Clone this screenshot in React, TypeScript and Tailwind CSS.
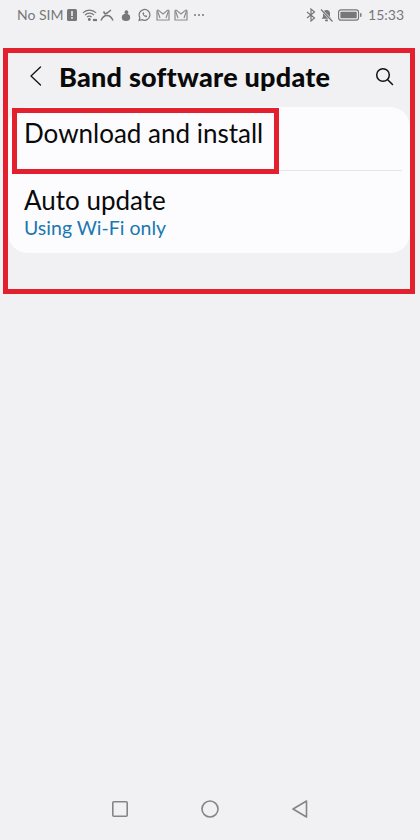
export default function App() {
  return (
    <div className="relative flex h-[840px] w-[420px] flex-col overflow-hidden bg-[#f1f1f3] font-['Lato',sans-serif]">
      {/* status bar */}
      <div className="flex h-[30px] items-center justify-between pl-[17px] pr-[16px] text-[#77777b]">
        <div className="flex items-center gap-[2px]">
          <span className="text-[14px] leading-none">No SIM</span>
          <svg width="10" height="14" viewBox="0 0 10 14" className="ml-[1px]">
            <rect x="0" y="1" width="10" height="12" rx="1.500" fill="#77777b" />
            <rect x="4.200" y="3" width="1.600" height="5" fill="#f1f1f3" />
            <rect x="4.200" y="9" width="1.600" height="1.800" fill="#f1f1f3" />
          </svg>
          <svg width="15" height="15" viewBox="0 0 17 15" fill="none" stroke="#77777b" strokeWidth="1.300" className="ml-[3px]">
            <path d="M1 4.500a10.500 10.500 0 0 1 15 0" />
            <path d="M3.300 7a7.200 7.200 0 0 1 10.400 0" />
            <path d="M5.600 9.400a3.800 3.800 0 0 1 5.400 0" />
            <circle cx="8.300" cy="12" r="1" fill="#77777b" />
            <circle cx="13.600" cy="12.600" r="0.700" fill="#77777b" />
            <circle cx="15.800" cy="12.600" r="0.700" fill="#77777b" />
          </svg>
          <svg width="14" height="13" viewBox="0 0 14 13" fill="none" stroke="#77777b" strokeWidth="1.500" className="ml-[1px]">
            <path d="M1 11.500C3 7 5 6.500 7 6.500s4 .5 6 5" />
            <path d="M5 5 3.500 2.500M5 5l2-1 4-3" />
          </svg>
          <svg width="10" height="13" viewBox="0 0 12 14" fill="#77777b" className="ml-[5px]">
            <circle cx="6.500" cy="3" r="2.200" />
            <ellipse cx="6" cy="9.300" rx="5" ry="4.300" />
          </svg>
          <svg width="13" height="14" viewBox="0 0 14 14" fill="none" stroke="#77777b" strokeWidth="1.300" className="ml-[5px]">
            <path d="M1.200 12.800 2 9.700A5.800 5.800 0 1 1 4.400 12Z" />
            <path d="M4.800 4.500c0 2.500 2.200 4.800 4.700 4.800l.4-1.400-1.500-.7-.7.7c-.7-.3-1.300-1-1.600-1.600l.7-.7-.6-1.500Z" fill="#77777b" stroke="none" />
          </svg>
          <svg width="14" height="12" viewBox="0 0 14 12" fill="none" stroke="#8b8b8f" strokeWidth="1.200" className="ml-[3px]">
            <path d="M1 11V2.200a1 1 0 0 1 1.600-.8L7 5l4.400-3.600a1 1 0 0 1 1.600.8V11Z" />
            <path d="M1.500 2 4 9M12.500 2 10 9" />
          </svg>
          <svg width="14" height="12" viewBox="0 0 14 12" fill="none" stroke="#8b8b8f" strokeWidth="1.200" className="ml-[2px]">
            <path d="M1 11V2.200a1 1 0 0 1 1.600-.8L7 5l4.400-3.600a1 1 0 0 1 1.600.8V11Z" />
            <path d="M1.500 2 4 9M12.500 2 10 9" />
          </svg>
          <span className="ml-[4px] flex gap-[2px]">
            <span className="h-[2px] w-[2px] rounded-full bg-[#77777b]" />
            <span className="h-[2px] w-[2px] rounded-full bg-[#77777b]" />
            <span className="h-[2px] w-[2px] rounded-full bg-[#77777b]" />
          </span>
        </div>
        <div className="flex items-center">
          <svg width="10" height="14" viewBox="0 0 10 14" fill="none" stroke="#77777b" strokeWidth="1.200">
            <path d="M1 4 8.500 10 5 13V1l3.500 3L1 10" />
          </svg>
          <svg width="13" height="13" viewBox="0 0 13 13" fill="#77777b" className="ml-[4px]">
            <path d="M6.500 1A3.600 3.600 0 0 0 3 4.600V8L1.500 9.800h10L10 8V4.600A3.600 3.600 0 0 0 6.500 1Z" />
            <rect x="5" y="10.500" width="3" height="1.800" rx="0.900" />
            <path d="M1 .5 12.500 12.500" stroke="#f1f1f3" strokeWidth="2.400" />
            <path d="M1 .5 12.500 12.500" stroke="#77777b" strokeWidth="1.200" />
          </svg>
          <svg width="24" height="12" viewBox="0 0 25 12" className="ml-[5px]">
            <rect x="0.600" y="0.600" width="20.800" height="10.800" rx="2.500" fill="none" stroke="#77777b" strokeWidth="1.200" />
            <rect x="2.500" y="2.500" width="17" height="7" rx="1" fill="#77777b" />
            <rect x="23" y="4" width="1.500" height="4" rx="0.700" fill="#77777b" />
          </svg>
          <span className="ml-[6px] text-[14px] leading-none">15:33</span>
        </div>
      </div>

      {/* header */}
      <div className="mt-[28px] flex h-[36px] items-center pl-[29px] pr-[26px]">
        <svg width="13" height="20" viewBox="0 0 13 20" fill="none" stroke="#111" strokeWidth="1.300" strokeLinecap="round" strokeLinejoin="round">
          <path d="M11.500 1 2 10l9.500 9" />
        </svg>
        <h1 className="ml-[17px] text-[27px] font-black leading-none tracking-[0.25px] text-[#0a0a0a]">Band software update</h1>
        <svg width="19" height="19" viewBox="0 0 19 19" fill="none" stroke="#111" strokeWidth="1.500" strokeLinecap="round" className="ml-auto">
          <circle cx="8" cy="8" r="6.300" />
          <path d="M12.700 12.700 17.500 17.500" />
        </svg>
      </div>

      {/* card */}
      <div className="ml-[8px] mr-[10px] mt-[13px] flex h-[146px] flex-col rounded-[20px] bg-[#fcfcfe] pl-[16px] pr-[8px]">
        <div className="h-[64px] border-b border-[#e6e6e8] pt-[11px] text-[26px] leading-[30px] text-[#0a0a0a]">
          Download and install
        </div>
        <div className="pt-[14px]">
          <div className="text-[26px] leading-[30px] text-[#0a0a0a]">Auto update</div>
          <div className="mt-[1px] text-[19.5px] leading-[24px] text-[#1a78b0]">Using Wi-Fi only</div>
        </div>
      </div>

      {/* nav bar */}
      <div className="mt-auto flex h-[48px] items-start justify-center gap-[72px] pt-[8px]">
        <svg width="18" height="18" viewBox="0 0 18 18" fill="none" stroke="#858587" strokeWidth="1.600">
          <rect x="1.800" y="1.800" width="14.400" height="14.400" rx="1" />
        </svg>
        <svg width="18" height="18" viewBox="0 0 18 18" fill="none" stroke="#858587" strokeWidth="1.600">
          <circle cx="9" cy="9" r="8" />
        </svg>
        <svg width="18" height="18" viewBox="0 0 18 18" fill="none" stroke="#858587" strokeWidth="1.600" strokeLinejoin="round">
          <path d="M15.500 1 2 9l13.500 8Z" />
        </svg>
      </div>

      {/* red annotation boxes */}
      <div className="absolute left-[3px] top-[48px] h-[246px] w-[412px] border-[5px] border-[#e3202e]" />
      <div className="absolute left-[12px] top-[108px] h-[66px] w-[267px] border-[5px] border-[#e3202e]" />
    </div>
  );
}
